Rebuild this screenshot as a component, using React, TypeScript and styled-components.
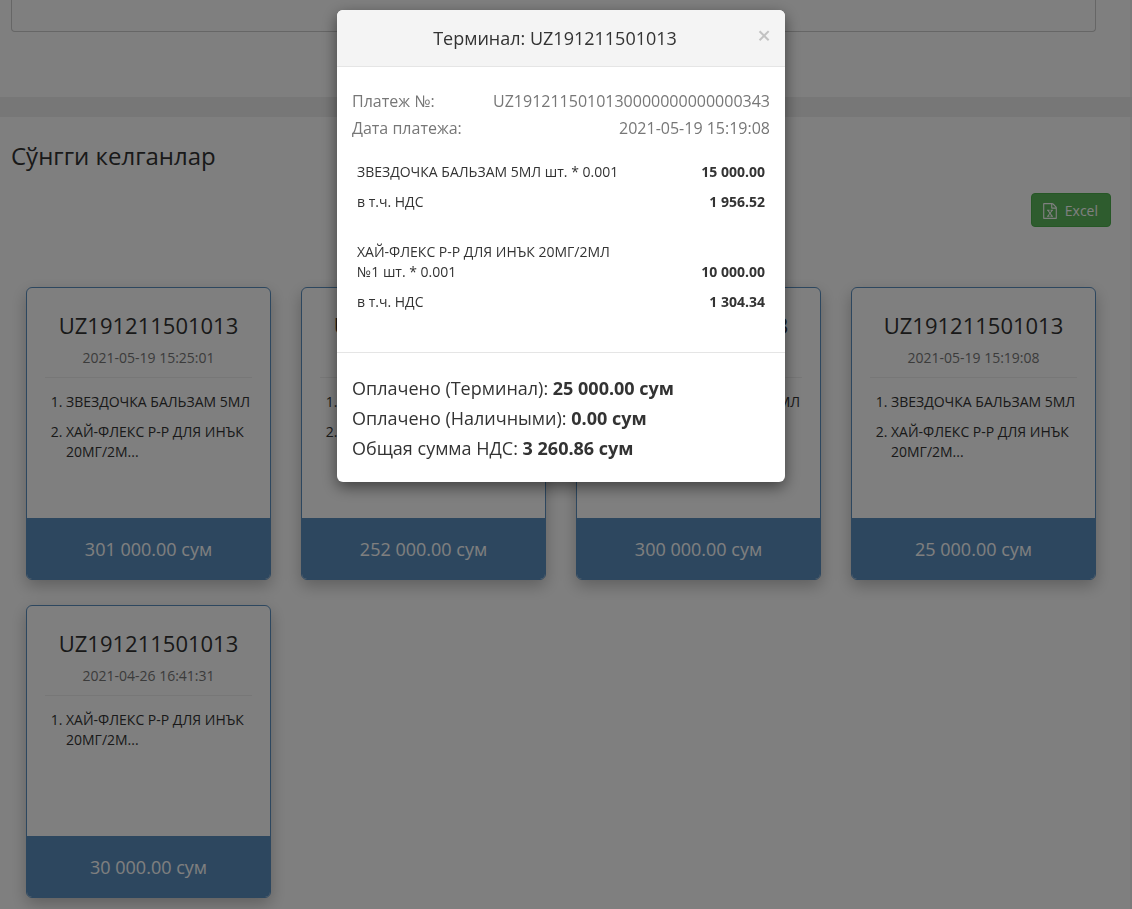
import React from 'react';
import styled, { createGlobalStyle } from 'styled-components';

const GlobalStyle = createGlobalStyle`
  *, *::before, *::after { box-sizing: border-box; }
  body {
    margin: 0;
    background: #fff;
    color: #333;
    font-family: "Open Sans", "Noto Sans", sans-serif;
    font-size: 14px;
    line-height: 20px;
  }
  button { font-family: inherit; }
`;

const Page = styled.main`
  min-height: 100vh;
  padding-right: 8px;
  border-right: 2px solid #f4f4f4;
`;

const FilterSection = styled.section`
  padding: 0 26px 65px 11px;
`;

const FilterBox = styled.div`
  height: 32px;
  border: 1px solid #ccc;
  border-top: 0;
  border-radius: 0 0 4px 4px;
`;

const Divider = styled.div`
  height: 20px;
  margin-right: -10px;
  background: #eee;
`;

const Receipts = styled.section`
  padding: 23px 11px 12px;
`;

const Heading = styled.h1`
  margin: 0;
  font-size: 24px;
  line-height: 32px;
  font-weight: 400;
`;

const Toolbar = styled.div`
  display: flex;
  justify-content: flex-end;
  margin: 21px 0 60px;
`;

const ExcelButton = styled.button`
  display: flex;
  align-items: center;
  gap: 8px;
  height: 34px;
  padding: 2px 12px 0 11px;
  border: 1px solid #4cae4c;
  border-radius: 4px;
  background: #5cb85c;
  color: #fff;
  font-size: 14px;
  line-height: 20px;
  cursor: pointer;
`;

const Grid = styled.div`
  display: grid;
  grid-template-columns: repeat(4, minmax(0, 1fr));
  gap: 25px 30px;
  padding: 0 15px;
`;

const Card = styled.article`
  display: flex;
  flex-direction: column;
  min-height: 293px;
  border: 1px solid #5b8fbf;
  border-radius: 6px;
  background: #fff;
  box-shadow: 0 6px 16px rgba(0, 0, 0, 0.25);
  overflow: hidden;
`;

const CardBody = styled.div`
  flex: 1;
  padding: 21px 18px 0;
`;

const CardTitle = styled.h2`
  margin: 0;
  font-size: 22px;
  line-height: 32px;
  font-weight: 400;
  text-align: center;
`;

const CardDate = styled.p`
  margin: 7px 0 9px;
  color: #777;
  text-align: center;
`;

const Rule = styled.hr`
  margin: 0;
  border: 0;
  border-top: 1px solid #eee;
`;

const Items = styled.ol`
  display: grid;
  gap: 10px;
  margin: 14px -4px 0 0;
  padding: 0 0 0 21px;
`;

const CardTotal = styled.div`
  padding: 18px 0 17px;
  background: #5b8fbf;
  color: #fff;
  font-size: 18px;
  line-height: 26px;
  text-align: center;
`;

const Backdrop = styled.div`
  position: fixed;
  inset: 0;
  padding: 10px 10px 0 0;
  background: rgba(0, 0, 0, 0.5);
  overflow: auto;
`;

const Dialog = styled.div`
  width: 448px;
  max-width: 100%;
  margin: 0 auto;
  border-radius: 6px;
  background: #fff;
  box-shadow: 0 5px 15px rgba(0, 0, 0, 0.5);
  overflow: hidden;
`;

const DialogHeader = styled.header`
  position: relative;
  padding: 15px;
  background: #f4f4f4;
  border-bottom: 1px solid #e5e5e5;
`;

const DialogTitle = styled.h2`
  margin: 0;
  padding-right: 12px;
  font-size: 18px;
  line-height: 26px;
  font-weight: 400;
  text-align: center;
`;

const CloseButton = styled.button`
  position: absolute;
  top: 14px;
  right: 14px;
  padding: 0;
  border: 0;
  background: transparent;
  color: #000;
  font-size: 24px;
  line-height: 21px;
  font-weight: 600;
  opacity: 0.2;
  cursor: pointer;
`;

const DialogBody = styled.div`
  padding: 21px 15px 35px;
`;

const Meta = styled.dl`
  display: grid;
  grid-template-columns: auto 1fr;
  margin: 0 0 15px;
  color: #777;
  font-size: 16px;
  line-height: 27px;

  dt, dd { margin: 0; }
  dd { text-align: right; }
`;

const Lines = styled.table`
  width: 100%;
  table-layout: fixed;
  border-collapse: collapse;

  th, td { padding: 5px; vertical-align: bottom; }
  th { width: 66%; font-weight: 400; text-align: left; }
  td { font-weight: 700; text-align: right; }
  tbody + tbody::before { content: ""; display: table-row; height: 20px; }
`;

const DialogFooter = styled.footer`
  padding: 20px 15px 19px;
  border-top: 1px solid #e5e5e5;
  font-size: 18px;
  line-height: 30px;

  p { margin: 0; }
`;

const ExcelIcon = () => (
  <svg width="14" height="16" viewBox="0 0 1536 1792" fill="currentColor" aria-hidden="true">
    <path d="M1468 380q28 28 48 76t20 88v1152q0 40-28 68t-68 28h-1344q-40 0-68-28t-28-68v-1600q0-40 28-68t68-28h896q40 0 88 20t76 48zm-444-244v376h376q-10-29-22-41l-313-313q-12-12-41-22zm384 1528v-1024h-416q-40 0-68-28t-28-68v-416h-768v1536h1280zm-979-234v106h281v-106h-75l103-161q5-7 10-16.500t7.500-13.500 3.500-4h2q1 4 5 10 2 4 4.500 7.500t6 8 6.500 8.500l107 161h-76v106h291v-106h-68l-192-273 195-282h67v-107h-279v107h74l-103 159q-4 7-10 16.500t-9 13.500l-2 3h-2q-1-4-5-10-6-11-17-23l-106-159h76v-107h-290v107h68l189 272-194 283h-68z" />
  </svg>
);

const STAR = 'ЗВЕЗДОЧКА БАЛЬЗАМ 5МЛ';
const FLEX = 'ХАЙ-ФЛЕКС Р-Р ДЛЯ ИНЪК 20МГ/2М...';

const receipts = [
  { date: '2021-05-19 15:25:01', items: [STAR, FLEX], total: '301 000.00 сум' },
  { date: '2021-05-19 15:23:17', items: [STAR, FLEX], total: '252 000.00 сум' },
  { date: '2021-05-19 15:21:42', items: [STAR], total: '300 000.00 сум' },
  { date: '2021-05-19 15:19:08', items: [STAR, FLEX], total: '25 000.00 сум' },
  { date: '2021-04-26 16:41:31', items: [FLEX], total: '30 000.00 сум' },
];

const lines = [
  { name: 'ЗВЕЗДОЧКА БАЛЬЗАМ 5МЛ шт. * 0.001', price: '15 000.00', vat: '1 956.52' },
  { name: 'ХАЙ-ФЛЕКС Р-Р ДЛЯ ИНЪК 20МГ/2МЛ №1 шт. * 0.001', price: '10 000.00', vat: '1 304.34' },
];

const totals = [
  { label: 'Оплачено (Терминал):', value: '25 000.00 сум' },
  { label: 'Оплачено (Наличными):', value: '0.00 сум' },
  { label: 'Общая сумма НДС:', value: '3 260.86 сум' },
];

export default function App() {
  return (
    <>
      <GlobalStyle />
      <Page>
        <FilterSection>
          <FilterBox />
        </FilterSection>
        <Divider />
        <Receipts>
          <Heading>Сўнгги келганлар</Heading>
          <Toolbar>
            <ExcelButton type="button">
              <ExcelIcon />
              Excel
            </ExcelButton>
          </Toolbar>
          <Grid>
            {receipts.map((receipt) => (
              <Card key={receipt.date}>
                <CardBody>
                  <CardTitle>UZ191211501013</CardTitle>
                  <CardDate>{receipt.date}</CardDate>
                  <Rule />
                  <Items>
                    {receipt.items.map((item) => (
                      <li key={item}>{item}</li>
                    ))}
                  </Items>
                </CardBody>
                <CardTotal>{receipt.total}</CardTotal>
              </Card>
            ))}
          </Grid>
        </Receipts>
      </Page>
      <Backdrop>
        <Dialog role="dialog" aria-modal="true" aria-labelledby="dialog-title">
          <DialogHeader>
            <DialogTitle id="dialog-title">Терминал: UZ191211501013</DialogTitle>
            <CloseButton type="button" aria-label="Close">×</CloseButton>
          </DialogHeader>
          <DialogBody>
            <Meta>
              <dt>Платеж №:</dt>
              <dd>UZ1912115010130000000000000343</dd>
              <dt>Дата платежа:</dt>
              <dd>2021-05-19 15:19:08</dd>
            </Meta>
            <Lines>
              {lines.map((line) => (
                <tbody key={line.name}>
                  <tr>
                    <th scope="row">{line.name}</th>
                    <td>{line.price}</td>
                  </tr>
                  <tr>
                    <th scope="row">в т.ч. НДС</th>
                    <td>{line.vat}</td>
                  </tr>
                </tbody>
              ))}
            </Lines>
          </DialogBody>
          <DialogFooter>
            {totals.map((total) => (
              <p key={total.label}>
                {total.label} <strong>{total.value}</strong>
              </p>
            ))}
          </DialogFooter>
        </Dialog>
      </Backdrop>
    </>
  );
}
